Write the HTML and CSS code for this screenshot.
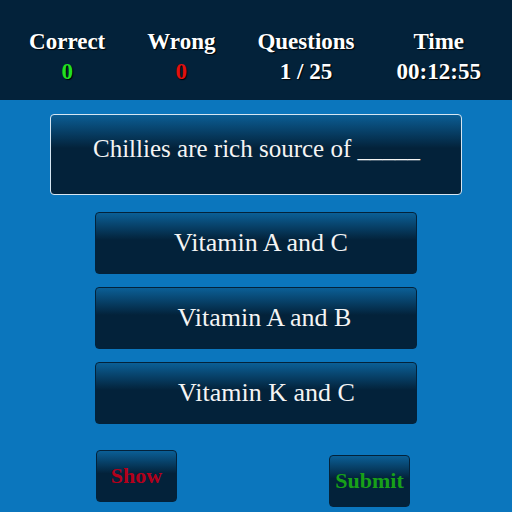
FILE: index.html
```html
<!DOCTYPE html>
<html>
<head>
<meta charset="utf-8">
<link rel="stylesheet" href="styles.css">
</head>
<body>
<div class="header">
  <div class="stat"><div class="label">Correct</div><div class="value green">0</div></div>
  <div class="stat"><div class="label">Wrong</div><div class="value red">0</div></div>
  <div class="stat"><div class="label">Questions</div><div class="value">1 / 25</div></div>
  <div class="stat"><div class="label">Time</div><div class="value">00:12:55</div></div>
</div>
<div class="main">
  <div class="question">Chillies are rich source of _____</div>
  <div class="options">
    <div class="option">Vitamin A and C</div>
    <div class="option option-b">Vitamin A and B</div>
    <div class="option option-c">Vitamin K and C</div>
  </div>
  <div class="actions">
    <div class="btn show">Show</div>
    <div class="btn submit">Submit</div>
  </div>
</div>
</body>
</html>
```
FILE: styles.css
```css
html, body {
  margin: 0;
  padding: 0;
  width: 512px;
  height: 512px;
  overflow: hidden;
  background: #0b76bd;
  font-family: "Liberation Serif", "Times New Roman", serif;
}
.header {
  height: 100px;
  background: #03223a;
  display: flex;
  justify-content: center;
  gap: 42px;
  padding-top: 28px;
  padding-right: 2px;
  box-sizing: border-box;
}
.stat {
  text-align: center;
  color: #ffffff;
  font-weight: bold;
  font-size: 23px;
  line-height: 27px;
  text-shadow: 1px 1px 1px #000;
}
.value { margin-top: 3px; }
.green { color: #22e022; }
.red { color: #e01010; }
.main {
  display: flex;
  flex-direction: column;
  align-items: center;
}
.question {
  margin-top: 14px;
  margin-right: 1px;
  width: 408px;
  height: 67px;
  padding-bottom: 12px;
  padding-left: 2px;
  border: 1px solid #d6e6f2;
  border-radius: 4px;
  background: linear-gradient(to bottom, #0b5d94 0%, #03223a 42%, #03223a 100%);
  color: #f4f4f4;
  font-size: 25px;
  display: flex;
  align-items: center;
  justify-content: center;
}
.options {
  margin-top: 17px;
  display: flex;
  flex-direction: column;
  gap: 13px;
}
.option {
  width: 322px;
  height: 62px;
  border: 1px solid #03223a;
  border-radius: 4px;
  background: linear-gradient(to bottom, #0b5f96 0%, #03223a 45%, #03223a 100%);
  color: #f4f4f4;
  font-size: 26px;
  display: flex;
  align-items: center;
  justify-content: center;
  padding-left: 10px;
  box-sizing: border-box;
}
.option-b { padding-left: 17px; }
.option-c { padding-left: 21px; }
.actions {
  width: 314px;
  display: flex;
  justify-content: space-between;
  align-items: flex-start;
  margin-top: 26px;
  margin-right: 6px;
}
.btn {
  width: 81px;
  height: 52px;
  border: 1px solid #03223a;
  border-radius: 4px;
  background: linear-gradient(to bottom, #0b5f96 0%, #03223a 45%, #03223a 100%);
  font-size: 22px;
  font-weight: bold;
  display: flex;
  align-items: center;
  justify-content: center;
  box-sizing: border-box;
}
.show { color: #b3001b; }
.submit { color: #18a018; margin-top: 5px; }
```
